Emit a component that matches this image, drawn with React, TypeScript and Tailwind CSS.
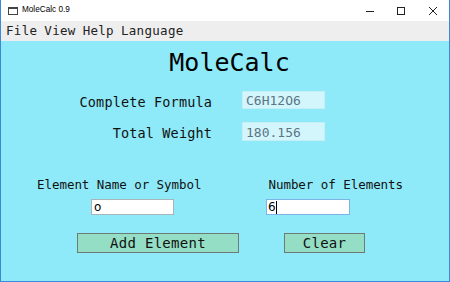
import React from 'react';

const mono = { fontFamily: '"DejaVu Sans Mono", monospace' };

export default function App() {
  return (
    <div className="w-[450px] h-[282px] flex flex-col bg-white border-x border-b border-[#3b8ad9] overflow-hidden">
      {/* Title bar */}
      <div className="h-[21px] flex items-center bg-white shrink-0">
        <svg className="ml-[7px] w-[10px] h-[8px]" viewBox="0 0 10 8">
          <rect x="0.5" y="0.5" width="9" height="7" fill="none" stroke="#444" strokeWidth="1" />
          <rect x="0.5" y="0.5" width="9" height="1.5" fill="#444" />
        </svg>
        <span className="ml-[4px] text-[8.2px] text-black" style={{ fontFamily: '"Liberation Sans", Arial, sans-serif' }}>
          MoleCalc 0.9
        </span>
        <div className="ml-auto flex items-center">
          <svg className="w-[10px] h-[10px] mr-[21px]" viewBox="0 0 10 10">
            <line x1="1" y1="5.5" x2="9" y2="5.5" stroke="#222" strokeWidth="1" />
          </svg>
          <svg className="w-[10px] h-[10px] mr-[22px]" viewBox="0 0 10 10">
            <rect x="1.5" y="1.5" width="7" height="7" fill="none" stroke="#222" strokeWidth="1" />
          </svg>
          <svg className="w-[10px] h-[10px] mr-[11px]" viewBox="0 0 10 10">
            <path d="M1 1 L9 9 M9 1 L1 9" stroke="#222" strokeWidth="1" />
          </svg>
        </div>
      </div>

      {/* Menu bar */}
      <div className="h-[20px] flex items-center bg-[#eeeeee] shrink-0 pl-[5px] text-[12.5px] text-[#222] tracking-[0.3px]" style={mono}>
        <span>File</span>
        <span className="ml-[7px]">View</span>
        <span className="ml-[7px]">Help</span>
        <span className="ml-[7px]">Language</span>
      </div>

      {/* Main */}
      <div className="flex-1 bg-[#8eeaf8] flex flex-col text-[#111]" style={mono}>
        <div className="pt-[7px] pl-[9px] text-center text-[25px] leading-[29px] text-black">MoleCalc</div>

        <div className="mt-[14px] flex items-start">
          <div className="w-[211px] text-right text-[13.5px] leading-[18px] pt-[2px] tracking-[0.15px]">Complete Formula</div>
          <div className="ml-[30px] w-[83px] h-[18px] bg-[#d3f6fc] text-[#5b7584] text-[13px] leading-[18px] pl-[3px] border border-[#c6eef5]">
            C6H12O6
          </div>
        </div>

        <div className="mt-[11px] flex items-start">
          <div className="w-[211px] text-right text-[13.5px] leading-[19px] pt-[2px] tracking-[0.15px]">Total Weight</div>
          <div className="ml-[30px] w-[83px] h-[19px] bg-[#d3f6fc] text-[#5b7584] text-[13px] leading-[19px] pl-[3px] border border-[#c6eef5]">
            180.156
          </div>
        </div>

        <div className="mt-[34px] flex text-[12.5px] leading-[16px] tracking-[-0.05px]">
          <div className="ml-[36px]">Element Name or Symbol</div>
          <div className="ml-[67px]">Number of Elements</div>
        </div>

        <div className="mt-[6px] flex">
          <div className="ml-[90px] w-[83px] h-[16px] bg-white border border-[#a9b4b8] text-[12px] leading-[14px] pl-[2px] text-black" style={{ fontFamily: '"DejaVu Sans", sans-serif' }}>
            o
          </div>
          <div className="ml-[92px] w-[84px] h-[16px] bg-white border border-[#7fb3e6] text-[12px] leading-[14px] pl-[1px] text-black flex" style={{ fontFamily: '"DejaVu Sans", sans-serif' }}>
            6<span className="w-px h-[13px] bg-black mt-px" />
          </div>
        </div>

        <div className="mt-[18px] flex">
          <div className="ml-[76px] w-[162px] h-[20px] bg-[#93dec4] border border-[#6e7a76] flex items-center justify-center text-[14px] tracking-[0.3px] text-[#111]">
            Add Element
          </div>
          <div className="ml-[45px] w-[81px] h-[20px] bg-[#93dec4] border border-[#6e7a76] flex items-center justify-center text-[14px] tracking-[0.3px] text-[#111]">
            Clear
          </div>
        </div>
      </div>
    </div>
  );
}
